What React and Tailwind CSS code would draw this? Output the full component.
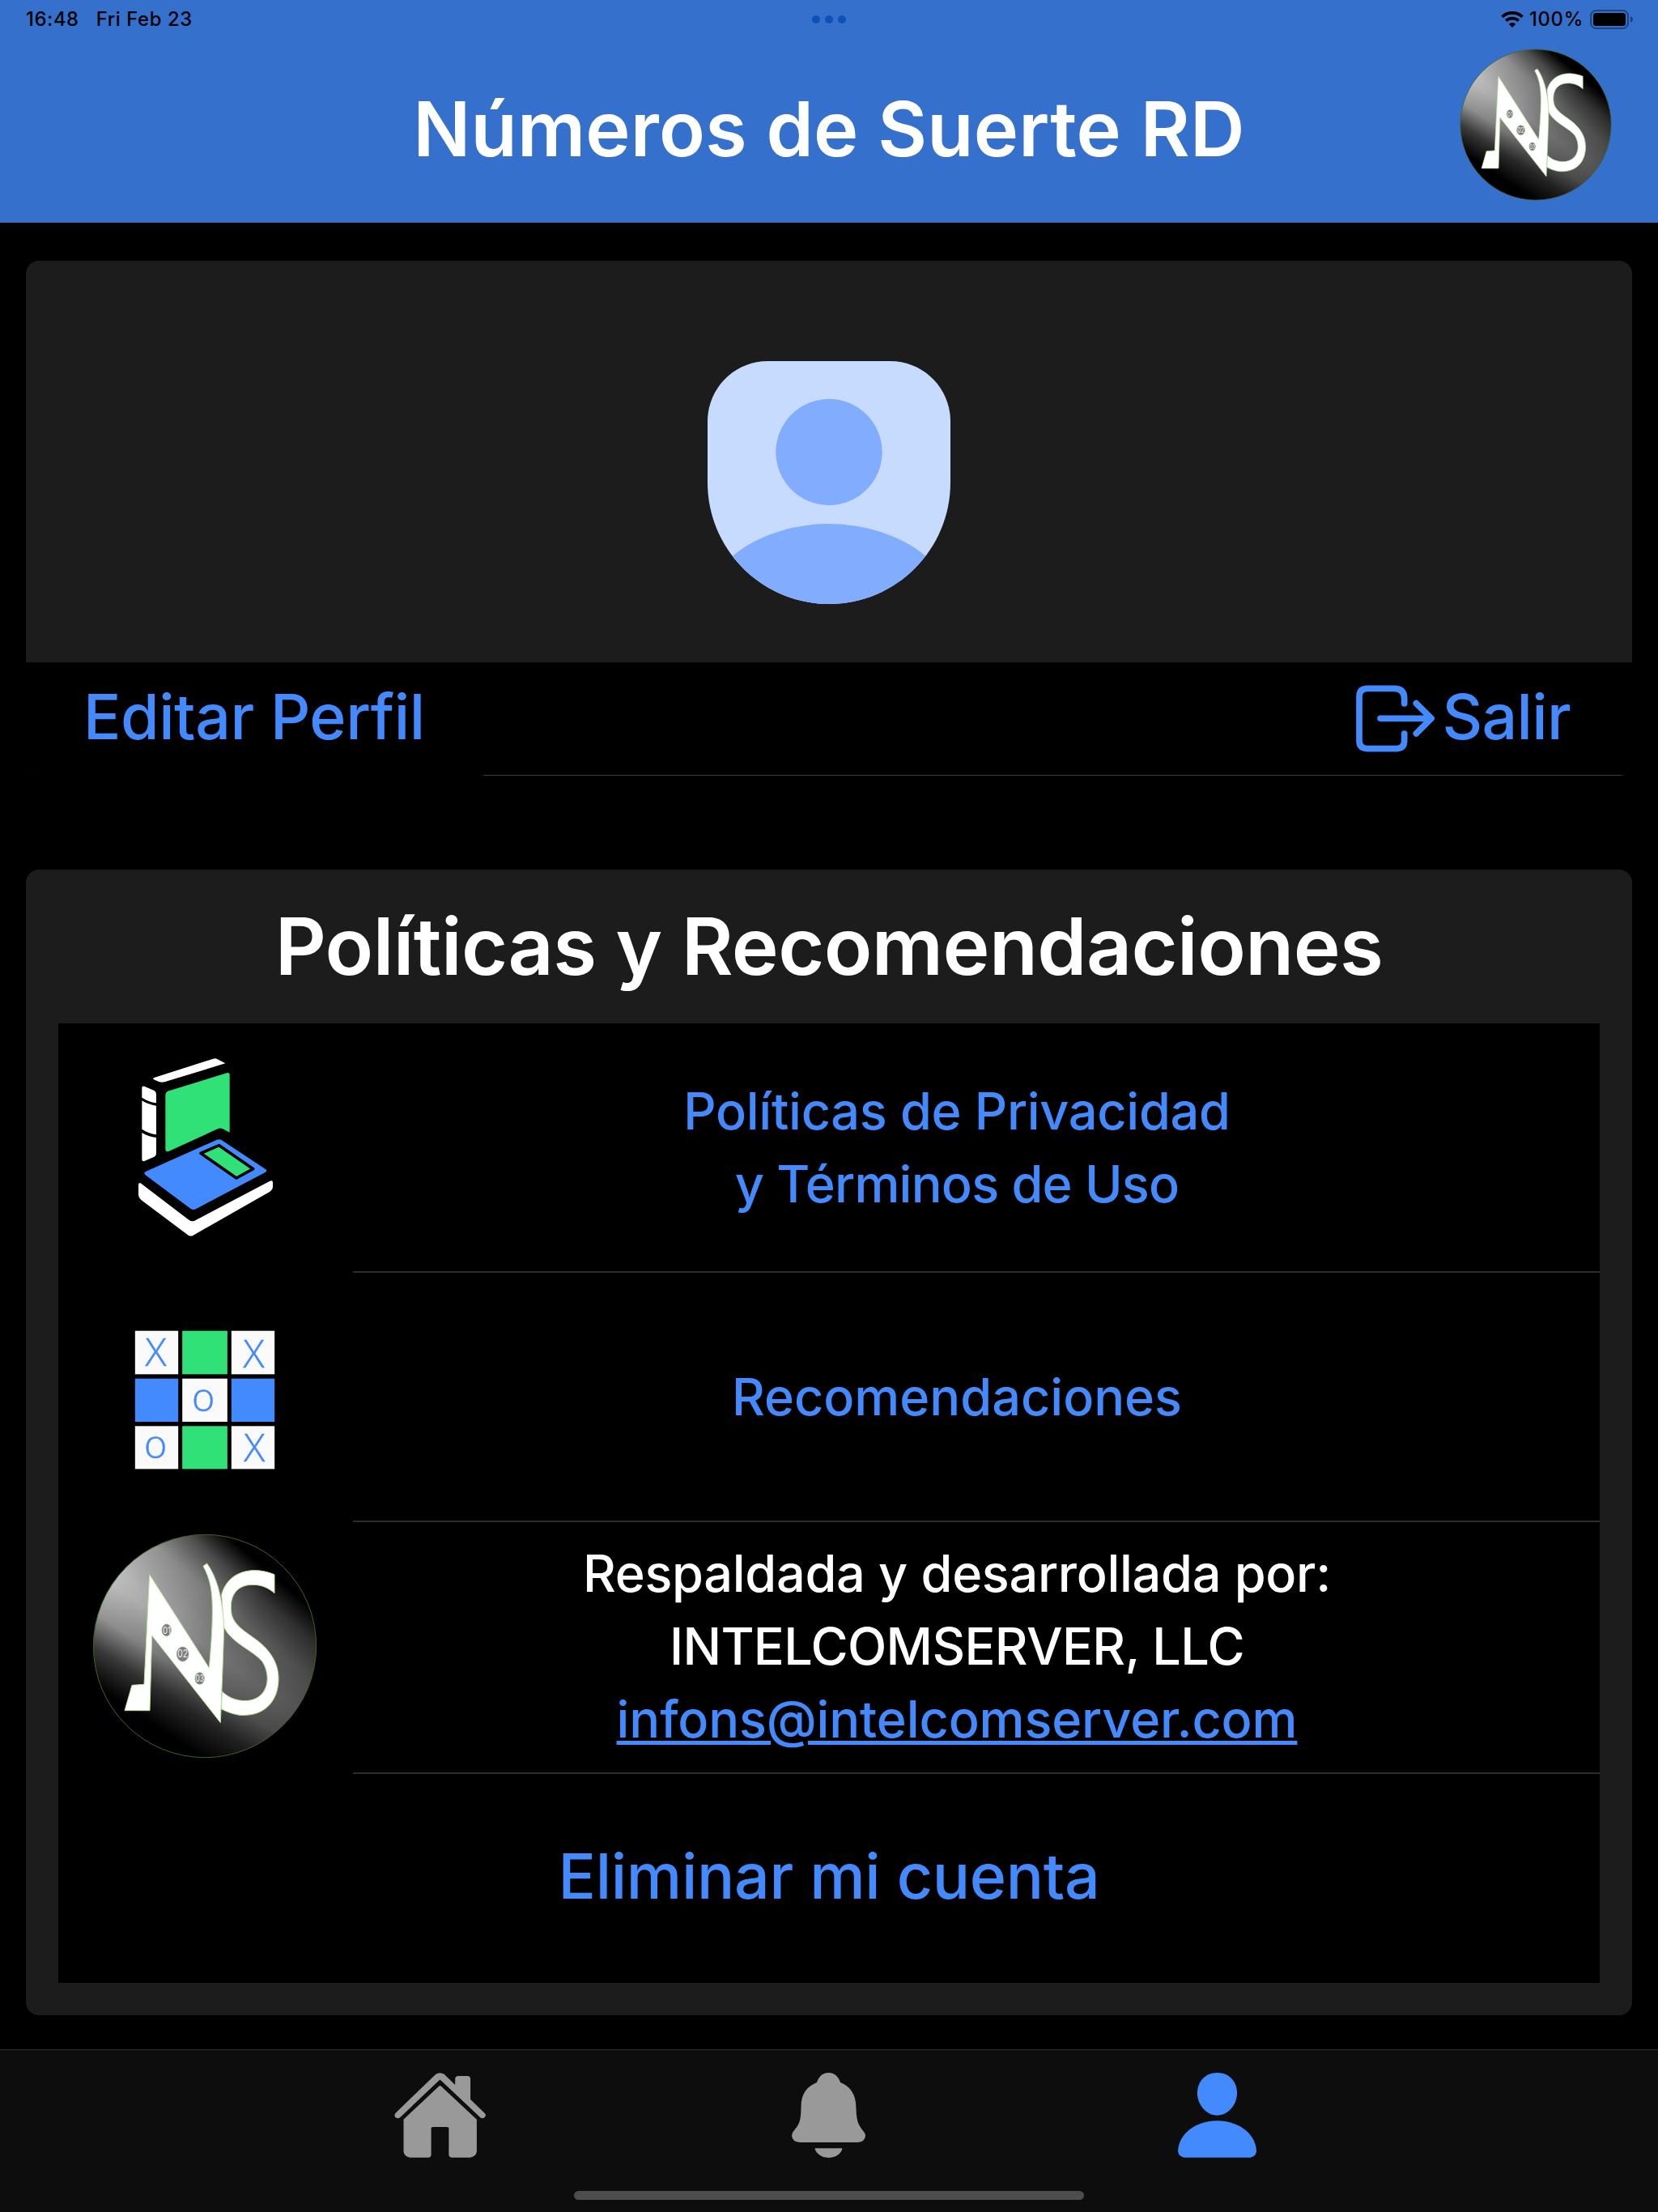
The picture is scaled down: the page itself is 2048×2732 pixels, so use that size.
function WifiIcon() {
  return (
    <svg width="28" height="20" viewBox="0 0 28 20" fill="none" stroke="black" strokeWidth="3.8">
      <path d="M1.5 6.8 C8.5 0.2 19.5 0.2 26.5 6.8" />
      <path d="M6.2 11.6 C10.5 7.6 17.5 7.6 21.8 11.6" />
      <path d="M14 20 L9.8 15.8 C12.2 13.5 15.8 13.5 18.2 15.8 Z" fill="black" stroke="none" />
    </svg>
  );
}

function BatteryIcon() {
  return (
    <svg width="54" height="24" viewBox="0 0 54 24">
      <rect x="1" y="1" width="46" height="22" rx="6.5" fill="none" stroke="black" strokeOpacity="0.4" strokeWidth="2" />
      <rect x="4" y="4" width="40" height="16" rx="3.5" />
      <path d="M50 8 Q53 9.5 53 12 Q53 14.5 50 16 Z" fillOpacity="0.45" />
    </svg>
  );
}

function StatusBar() {
  return (
    <div className="flex h-[47px] items-center justify-between pl-[32px] pr-[30px] text-[23.8px] font-medium text-black">
      <div className="flex w-[400px] gap-[21px] tracking-[0.6px]">
        <span>16:48</span>
        <span>Fri Feb 23</span>
      </div>
      <div className="flex gap-[6px]">
        <span className="size-[10px] rounded-full bg-[#0e50b8]" />
        <span className="size-[10px] rounded-full bg-[#0e50b8]" />
        <span className="size-[10px] rounded-full bg-[#0e50b8]" />
      </div>
      <div className="flex w-[402px] items-center justify-end">
        <WifiIcon />
        <span className="ml-[7px] mr-[8px] tracking-[0.7px]">100%</span>
        <BatteryIcon />
      </div>
    </div>
  );
}

function NSLogo({ className }) {
  return (
    <svg className={className} viewBox="43 44 834 830">
      <defs>
        <linearGradient id="metal" gradientUnits="userSpaceOnUse" x1="160" y1="170" x2="800" y2="750">
          <stop offset="0" stopColor="#bcbcbc" />
          <stop offset="0.3" stopColor="#9c9c9c" />
          <stop offset="0.55" stopColor="#757575" />
          <stop offset="1" stopColor="#555555" />
        </linearGradient>
        <linearGradient id="shadeBottom" gradientUnits="userSpaceOnUse" x1="460" y1="459" x2="267" y2="750">
          <stop offset="0" stopColor="black" stopOpacity="0" />
          <stop offset="0.35" stopColor="black" stopOpacity="0.18" />
          <stop offset="0.65" stopColor="black" stopOpacity="0.66" />
          <stop offset="1" stopColor="black" />
        </linearGradient>
        <linearGradient id="shadeTop" gradientUnits="userSpaceOnUse" x1="460" y1="459" x2="697" y2="182">
          <stop offset="0" stopColor="black" stopOpacity="0" />
          <stop offset="0.45" stopColor="black" stopOpacity="0.2" />
          <stop offset="0.75" stopColor="black" stopOpacity="0.55" />
          <stop offset="1" stopColor="black" />
        </linearGradient>
      </defs>
      <circle cx="460" cy="459" r="413" fill="url(#metal)" />
      <circle cx="460" cy="459" r="413" fill="url(#shadeBottom)" />
      <circle cx="460" cy="459" r="413" fill="url(#shadeTop)" stroke="#35611f" strokeWidth="3" />
      <g fill="white" stroke="#b4e396" strokeWidth="3">
        <path d="M718 194 C640 162 548 178 522 268 L530 388 C560 450 640 475 673 517 C705 565 700 650 622 661 C590 664 552 656 524 627 L521 692 C560 712 590 717 612 715 C690 712 733 655 733 580 C733 520 700 472 650 435 C610 405 572 385 560 345 C548 285 570 232 637 232 C670 232 695 243 718 263 Z" />
        <path d="M255 194 L476 540 C482 470 488 400 488 330 C488 260 482 215 454 163 L468 153 C505 205 520 270 528 345 C533 400 528 470 526 540 L518 743 L264 420 L256 698 H163 L190 604 L235 601 Z" />
      </g>
      <g fill="#7d7d7d" stroke="#86a878" strokeWidth="2">
        <ellipse cx="318" cy="400" rx="17" ry="22" />
        <ellipse cx="378" cy="489" rx="22" ry="27" />
        <ellipse cx="441" cy="579" rx="17" ry="22" />
      </g>
      <g fill="#f2f2f2" textAnchor="middle" fontFamily="Inter, sans-serif">
        <text x="319" y="413" fontSize="36" textLength="30" lengthAdjust="spacingAndGlyphs">01</text>
        <text x="378" y="502" fontSize="38" textLength="38" lengthAdjust="spacingAndGlyphs">02</text>
        <text x="441" y="592" fontSize="36" textLength="31" lengthAdjust="spacingAndGlyphs">03</text>
      </g>
    </svg>
  );
}

function Avatar() {
  return (
    <svg className="size-[300px]" viewBox="102 78 900 900">
      <clipPath id="avatar">
        <path d="M325 78 H779 C902 78 1002 178 1002 301 V528 C1002 776 800 978 552 978 C304 978 102 776 102 528 V301 C102 178 202 78 325 78 Z" />
      </clipPath>
      <g clipPath="url(#avatar)">
        <rect x="102" y="78" width="900" height="900" fill="#c7dbff" />
        <circle cx="552" cy="415" r="197" fill="#82adff" />
        <path d="M195 800 C290 720 430 681 552 681 C676 681 815 720 910 800 L1000 980 H100 Z" fill="#82adff" />
      </g>
    </svg>
  );
}

function LogoutIcon() {
  return (
    <svg className="mb-[2px] h-[83px] w-[97px]" viewBox="225 198 291 249" fill="none" stroke="#448aff" strokeWidth="23" strokeLinecap="round" strokeLinejoin="round">
      <path d="M404 267 V248 Q404 211 366 211 H265 Q237 213 237 240 V405 Q237 432 265 434 H376 Q404 432 404 405 V378" />
      <path d="M315 322 H500 M448 266 L504 322 L448 378" />
    </svg>
  );
}

function BookIcon() {
  return (
    <svg className="mb-[3px] h-[220px] w-[168px]" viewBox="90 80 504 660">
      <g fill="white">
        <path d="M149 153 L370 82 Q378 79 386 84 L415 99 L190 168 Q176 172 163 165 L147 157 Z" />
        <path d="M106 190 Q106 181 115 184 L150 199 Q159 204 159 214 V246 Q130 241 106 226 Z" />
        <path d="M106 237 Q130 252 159 256 V363 Q130 359 106 343 Z" />
        <path d="M106 356 Q130 371 159 374 V432 Q159 442 150 446 L115 461 Q106 464 106 454 Z" />
        <path d="M93 548 Q95 538 103 544 L281 680 Q291 687 301 682 L580 535 Q591 531 591 541 V556 Q590 568 579 575 L296 736 Q287 741 278 736 L106 607 Q93 598 93 584 Z" />
      </g>
      <path d="M193 218 Q193 205 206 201 L420 135 Q431 132 431 143 V355 L406 342 Q396 337 386 342 L205 425 Q193 429 193 417 Z" fill="#30e177" />
      <path d="M118 501 L382 383 Q394 378 404 385 L565 492 Q571 497 564 502 L307 638 Q296 644 286 637 L118 512 Q113 505 118 501 Z" fill="#448aff" />
      <path d="M324 432 L392 403 L518 490 L456 524 Z" fill="#30e177" stroke="black" strokeWidth="11" strokeLinejoin="round" />
    </svg>
  );
}

function BoardIcon() {
  return (
    <svg className="mt-[5px] mr-[2px] h-[172px] w-[174px] overflow-visible" viewBox="78 68 521 516">
      <g fill="#fafafa">
        <rect x="80" y="70" width="160" height="161" />
        <rect x="437" y="70" width="160" height="161" />
        <rect x="255" y="247" width="167" height="160" />
        <rect x="80" y="423" width="160" height="159" />
        <rect x="437" y="423" width="160" height="159" />
      </g>
      <rect x="255" y="70" width="167" height="161" fill="#30e177" />
      <rect x="255" y="423" width="167" height="159" fill="#30e177" />
      <rect x="80" y="247" width="160" height="160" fill="#448aff" />
      <rect x="437" y="247" width="160" height="160" fill="#448aff" />
      <g fill="#448aff" stroke="#448aff" strokeWidth="1.5" fontFamily="'Open Sans', sans-serif" fontWeight="300" fontSize="145" textAnchor="middle">
        <text x="157" y="201">X</text>
        <text x="520" y="205">X</text>
        <text x="333" y="368">o</text>
        <text x="156" y="543">o</text>
        <text x="522" y="555">X</text>
      </g>
    </svg>
  );
}

function HomeIcon() {
  return (
    <svg className="h-[105px] w-[113px]" viewBox="67 120 275 315" preserveAspectRatio="none" fill="#999999">
      <path d="M192 125 Q204 116 217 125 L250 165 V142 Q250 133 260 132 H286 Q296 133 296 142 V219 L339 270 Q345 278 338 286 Q331 292 325 285 L208 149 Q204 144 201 149 L85 285 Q78 292 71 286 Q65 278 71 269 Z" />
      <path d="M201 170 Q204 166 208 170 L315 293 V412 Q313 432 295 434 H240 Q232 433 231 425 V325 Q230 322 226 321 H184 Q179 321 178 325 V425 Q177 433 169 434 H114 Q97 432 95 412 V293 Z" />
    </svg>
  );
}

function BellIcon() {
  return (
    <svg className="h-[105px] w-[91px]" viewBox="1270 120 221 315" preserveAspectRatio="none" fill="#999999">
      <path d="M1345 156 C1352 132 1364 120 1381 120 C1397 120 1409 132 1416 156 C1445 170 1463 200 1463 250 C1464 290 1467 310 1482 332 Q1491 344 1491 353 Q1490 375 1468 378 H1294 Q1272 376 1270 353 Q1270 342 1278 332 C1296 306 1297 290 1298 245 C1298 195 1318 170 1345 156 Z" />
      <path d="M1340 404 V400 H1421 V404 C1408 445 1354 445 1340 404 Z" />
    </svg>
  );
}

function PersonIcon() {
  return (
    <svg className="h-[105px] w-[97px]" viewBox="133 120 235 315" preserveAspectRatio="none" fill="#448aff">
      <path d="M250 120 C288 120 310 155 310 195 C310 240 282 278 250 278 C219 278 191 240 191 195 C191 155 214 120 250 120 Z" />
      <path d="M133 411 C135 347 186 298 250 298 C315 298 366 347 368 411 Q366 431 350 434 H152 Q135 431 133 411 Z" />
    </svg>
  );
}

function PolicyRow({ icon, className, children }) {
  return (
    <div className={`flex ${className}`}>
      <div className="flex w-[364px] shrink-0 items-center justify-center">{icon}</div>
      <div className="flex flex-1 flex-col items-center justify-center border-b-2 border-[#2c2c2e] pr-[48px] text-[63px] leading-[90px] font-medium">
        {children}
      </div>
    </div>
  );
}

export default function App() {
  return (
    <div className="flex h-[2732px] w-[2048px] flex-col overflow-hidden bg-black font-['Inter',sans-serif] text-white">
      <header className="h-[275px] bg-[#3570cd]">
        <StatusBar />
        <div className="grid h-[213px] grid-cols-[1fr_auto_1fr] items-center">
          <h1 className="col-start-2 pt-[12px] text-[93.5px] leading-none font-semibold tracking-[0.2px]">
            Números de Suerte RD
          </h1>
          <NSLogo className="mr-[57px] size-[188px] justify-self-end" />
        </div>
      </header>

      <main className="flex flex-1 flex-col px-[32px] pt-[47px]">
        {/* Profile */}
        <section className="flex h-[636px] flex-col overflow-hidden rounded-[16px] bg-[#1c1c1c]">
          <div className="flex h-[496px] justify-center pt-[124px]">
            <Avatar />
          </div>
          <div className="relative flex h-[140px] items-center justify-between bg-black pr-[76px] pl-[71px] text-[77px] leading-none font-medium text-[#448aff]">
            <button className="pb-[5px] tracking-[-0.45px]">Editar Perfil</button>
            <button className="flex items-center gap-[9px]">
              <LogoutIcon />
              <span className="pb-[5px] tracking-[-0.7px]">Salir</span>
            </button>
            <div className="absolute right-0 bottom-0 left-[565px] h-px bg-[#3d3d3f]" />
          </div>
        </section>

        {/* Policies */}
        <section className="mt-[116px] flex h-[1415px] flex-col rounded-[16px] bg-[#1c1c1c] px-[40px]">
          <h2 className="flex h-[190px] items-center justify-center text-[98px] leading-none font-semibold tracking-[-0.57px]">
            Políticas y Recomendaciones
          </h2>
          <div className="flex h-[1185px] flex-col bg-black">
            <PolicyRow icon={<BookIcon />} className="h-[308px]">
              <div className="pb-px text-center text-[#448aff]">
                <span className="tracking-[-0.3px]">Políticas de Privacidad</span>
                <br />
                <span className="tracking-[-0.75px]">y Términos de Uso</span>
              </div>
            </PolicyRow>
            <PolicyRow icon={<BoardIcon />} className="h-[308px]">
              <div className="pb-px text-[#448aff]">Recomendaciones</div>
            </PolicyRow>
            <PolicyRow icon={<NSLogo className="mr-[2px] mb-[6px] size-[278px]" />} className="h-[311px]">
              <div className="pb-[3px] text-center">
                <div className="tracking-[-0.3px]">Respaldada y desarrollada por:</div>
                <div className="tracking-[-0.65px]">INTELCOMSERVER, LLC</div>
                <a className="tracking-[-0.12px] text-[#448aff] underline decoration-[5px] underline-offset-[4px]">
                  infons@intelcomserver.com
                </a>
              </div>
            </PolicyRow>
            <button className="flex h-[258px] items-center justify-center pb-[4px] text-[77px] font-medium tracking-[-0.3px] text-[#448aff]">
              Eliminar mi cuenta
            </button>
          </div>
        </section>
      </main>

      <nav className="flex h-[201px] flex-col items-center justify-between border-t border-[#2a2a2a] bg-[#0d0d0d] pt-[28px] pb-[15px]">
        <div className="mr-[2px] grid grid-cols-[480px_480px_480px] justify-items-center">
          <HomeIcon />
          <BellIcon />
          <PersonIcon />
        </div>
        <div className="h-[11px] w-[630px] rounded-full bg-[#4d4d4d]" />
      </nav>
    </div>
  );
}
